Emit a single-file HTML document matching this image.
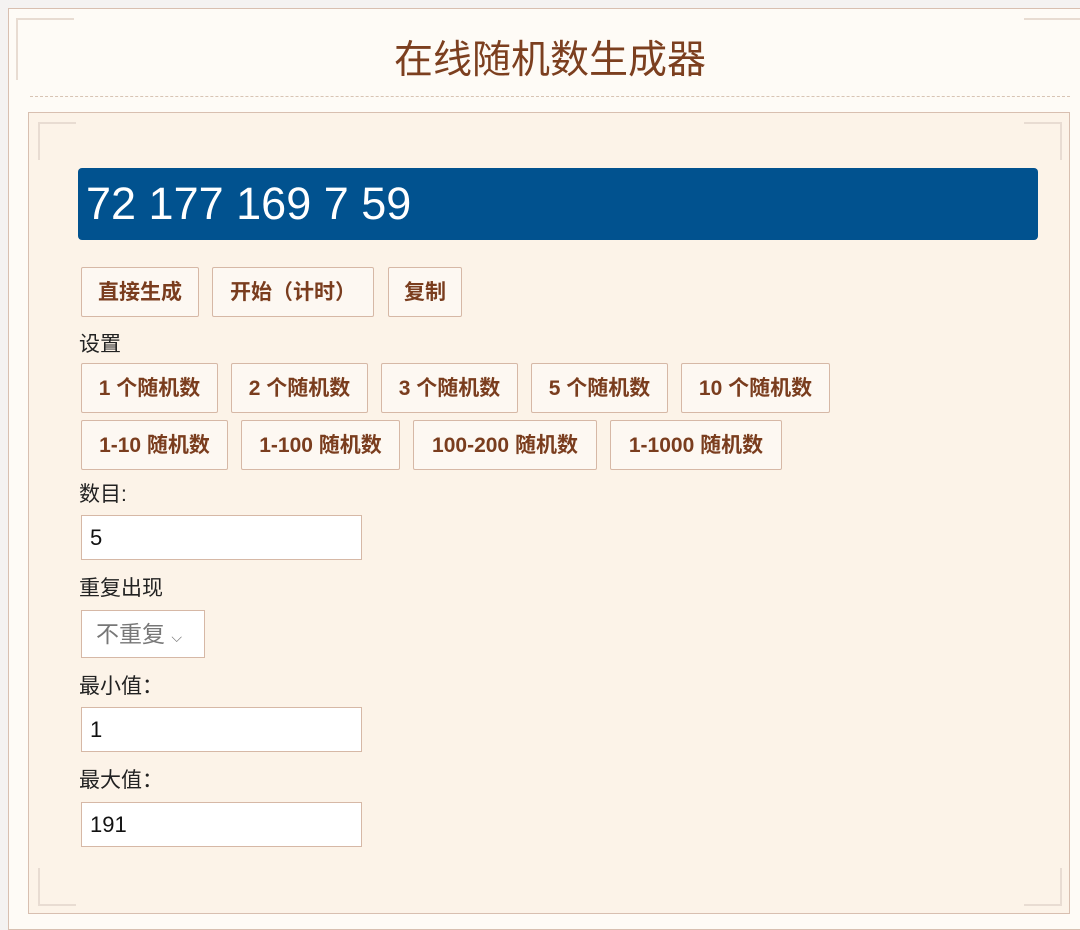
<!DOCTYPE html><html><head><meta charset="utf-8"><style>
body{margin:0;background:#f4f2f1;font-family:"Liberation Sans","Noto Sans CJK SC",sans-serif;}
.outer{position:absolute;left:8px;top:8px;width:1080px;height:920px;background:#fefbf6;border:1px solid #d8bfb0;}
h1{position:absolute;left:0;width:1100px;top:36px;margin:0;text-align:center;font-weight:normal;font-size:39px;color:#7c3f1f;line-height:50px;}
.dash{position:absolute;left:30px;right:0;top:96px;width:1040px;border-top:1px dashed #d8c4b4;}
.inner{position:absolute;left:28px;top:112px;width:1040px;height:800px;background:#fcf3e8;border:1px solid #d8bfb0;}
.res{position:absolute;left:78px;top:168px;width:960px;height:72px;background:#01528f;border-radius:4px;color:#fff;font-size:45px;line-height:72px;padding-left:8px;box-sizing:border-box;}
.b{position:absolute;height:50px;border:1px solid #d6b8a6;background:#fdf8f2;border-radius:2px;color:#7a3d1e;font-weight:bold;font-size:21px;line-height:50px;text-align:center;box-sizing:border-box;white-space:nowrap;}
.l{position:absolute;left:79px;font-size:21px;color:#222;}
.in{position:absolute;left:81px;width:281px;height:45px;background:#fff;border:1px solid #d6b8a6;box-sizing:border-box;font-size:22px;line-height:43px;padding-left:8px;color:#111;}
.c{position:absolute;width:36px;height:36px;border-left:2px solid #e8dcd2;border-top:2px solid #e8dcd2;}
</style></head><body>
<div class="outer"></div>
<div class="c" style="left:16px;top:18px;width:56px;height:60px"></div>
<div class="c" style="left:1024px;top:18px;width:56px;height:60px;border-left:none;border-right:2px solid #e8dcd2"></div>
<h1>在线随机数生成器</h1>
<div class="dash"></div>
<div class="inner"></div>
<div class="c" style="left:38px;top:122px"></div>
<div class="c" style="left:1024px;top:122px;border-left:none;border-right:2px solid #e8dcd2"></div>
<div class="c" style="left:38px;top:868px;border-top:none;border-bottom:2px solid #e8dcd2"></div>
<div class="c" style="left:1024px;top:868px;border-top:none;border-left:none;border-right:2px solid #e8dcd2;border-bottom:2px solid #e8dcd2"></div>
<div class="res">72 177 169 7 59</div>
<div class="b" style="left:81px;top:267px;width:118px">直接生成</div>
<div class="b" style="left:212px;top:267px;width:162px">开始（计时）</div>
<div class="b" style="left:388px;top:267px;width:74px">复制</div>
<div class="l" style="top:328px">设置</div>
<div class="b" style="left:81px;top:363px;width:137px">1 个随机数</div>
<div class="b" style="left:231px;top:363px;width:137px">2 个随机数</div>
<div class="b" style="left:381px;top:363px;width:137px">3 个随机数</div>
<div class="b" style="left:531px;top:363px;width:137px">5 个随机数</div>
<div class="b" style="left:681px;top:363px;width:149px">10 个随机数</div>
<div class="b" style="left:81px;top:420px;width:147px">1-10 随机数</div>
<div class="b" style="left:241px;top:420px;width:159px">1-100 随机数</div>
<div class="b" style="left:413px;top:420px;width:184px">100-200 随机数</div>
<div class="b" style="left:610px;top:420px;width:172px">1-1000 随机数</div>
<div class="l" style="top:478px">数目:</div>
<div class="in" style="top:515px">5</div>
<div class="l" style="top:572px">重复出现</div>
<div class="in" style="top:610px;width:124px;height:48px;line-height:46px;padding-left:14px;color:#777;font-size:23px">不重复 <span style="font-size:14px">⌵</span></div>
<div class="l" style="top:670px">最小值：</div>
<div class="in" style="top:707px">1</div>
<div class="l" style="top:764px">最大值：</div>
<div class="in" style="top:802px">191</div>
</body></html>
